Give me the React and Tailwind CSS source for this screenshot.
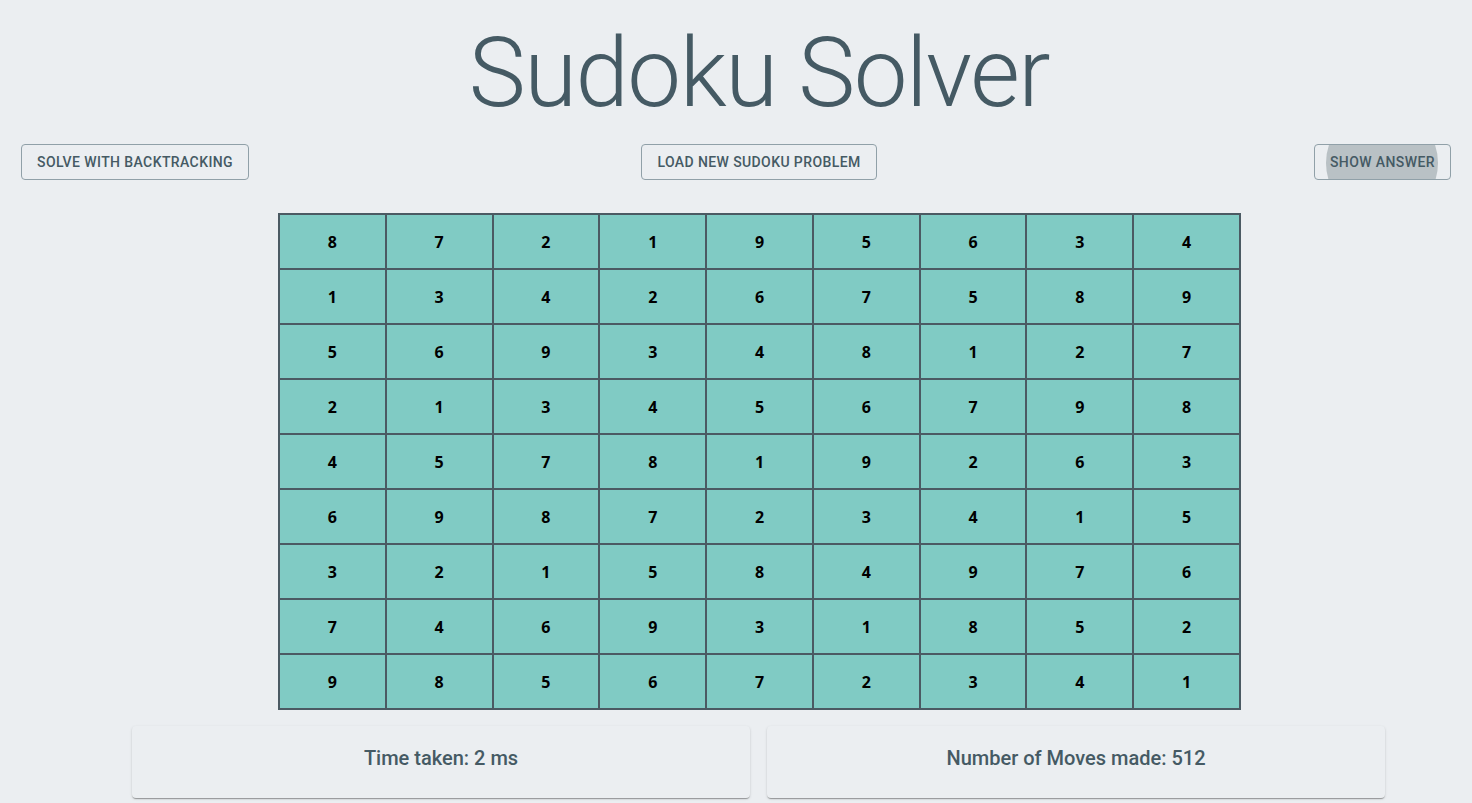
const board = [
  [8, 7, 2, 1, 9, 5, 6, 3, 4],
  [1, 3, 4, 2, 6, 7, 5, 8, 9],
  [5, 6, 9, 3, 4, 8, 1, 2, 7],
  [2, 1, 3, 4, 5, 6, 7, 9, 8],
  [4, 5, 7, 8, 1, 9, 2, 6, 3],
  [6, 9, 8, 7, 2, 3, 4, 1, 5],
  [3, 2, 1, 5, 8, 4, 9, 7, 6],
  [7, 4, 6, 9, 3, 1, 8, 5, 2],
  [9, 8, 5, 6, 7, 2, 3, 4, 1],
];

function OutlinedButton({ children, ripple }) {
  return (
    <button className="relative h-[36px] overflow-hidden rounded-[4px] border border-[#90a0a8] px-[15px] text-[14px] font-medium uppercase tracking-[0.4px] text-[#455a64]">
      {ripple && (
        <span className="absolute left-[11px] top-[-38px] h-[112px] w-[112px] rounded-full bg-[#b9c1c5]" />
      )}
      <span className="relative">{children}</span>
    </button>
  );
}

function StatCard({ children }) {
  return (
    <div className="w-[618px] rounded-[4px] bg-[#ebeef1] px-4 pt-4 pb-[24px] text-center shadow-[0px_2px_1px_-1px_rgba(0,0,0,0.2),0px_1px_1px_0px_rgba(0,0,0,0.14),0px_1px_3px_0px_rgba(0,0,0,0.12)]">
      <h6 className="text-[20px] font-medium leading-[32px] text-[#455a64]">{children}</h6>
    </div>
  );
}

export default function App() {
  return (
    <div className="min-h-[803px] bg-[#ebeef1] pt-[17px] font-['Roboto',sans-serif]">
      <div className="pl-[46px] text-center">
        <h1 className="text-[96px] font-light leading-[112px] tracking-[-1.5px] text-[#455a64]">
          Sudoku Solver
        </h1>
      </div>

      <div className="mt-[15px] flex items-center px-[21px]">
        <div className="flex flex-1 justify-start">
          <OutlinedButton>Solve with backtracking</OutlinedButton>
        </div>
        <div className="flex flex-1 justify-center pl-[46px]">
          <OutlinedButton>Load new sudoku problem</OutlinedButton>
        </div>
        <div className="flex flex-1 justify-end">
          <OutlinedButton ripple>Show answer</OutlinedButton>
        </div>
      </div>

      <div className="ml-[278px] mt-[33px] grid w-[963px] grid-cols-9 gap-[2px] bg-[#4b5a63] p-[2px]">
        {board.flat().map((n, i) => (
          <div
            key={i}
            className="flex h-[53px] items-center justify-center bg-[#80cbc4] font-['Open_Sans',sans-serif] text-[16px] font-bold text-black"
          >
            {n}
          </div>
        ))}
      </div>

      <div className="ml-[132px] mt-[16px] flex gap-[17px]">
        <StatCard>Time taken: 2 ms</StatCard>
        <StatCard>Number of Moves made: 512</StatCard>
      </div>
    </div>
  );
}
